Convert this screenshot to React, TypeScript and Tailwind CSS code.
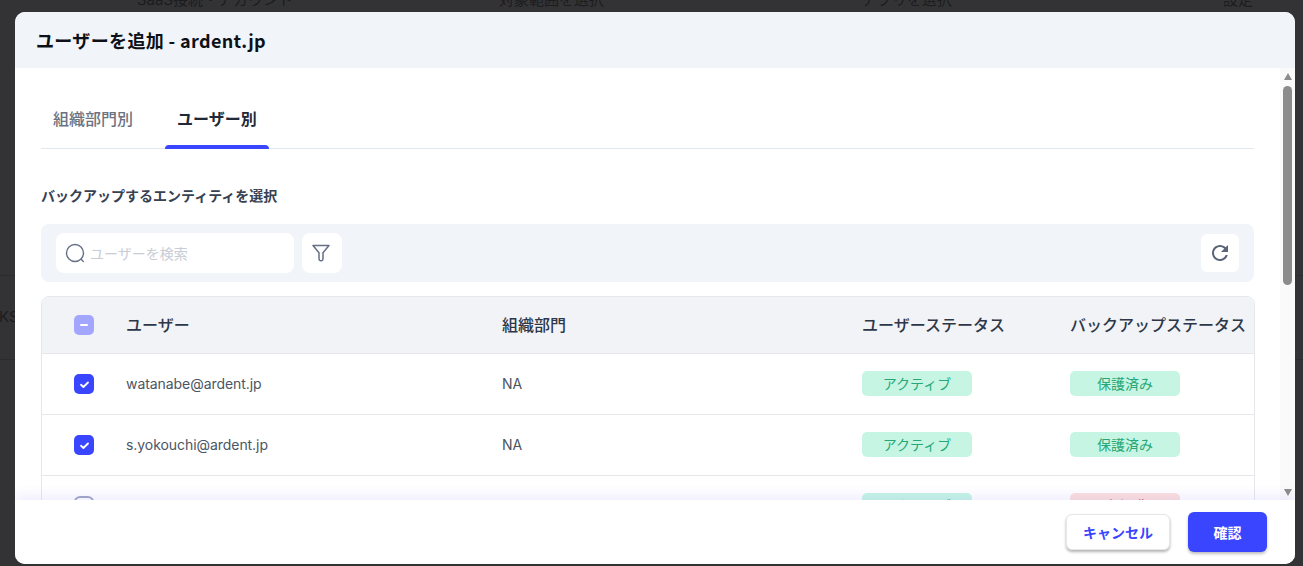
const rows = [
  { email: "watanabe@ardent.jp", checked: true, backup: "保護済み", safe: true },
  { email: "s.yokouchi@ardent.jp", checked: true, backup: "保護済み", safe: true },
  { email: "", checked: false, backup: "未保護", safe: false },
];

const cols = "grid grid-cols-[84px_376px_360px_208px_185px] items-center";

function CheckBox({ checked }: { checked: boolean }) {
  if (!checked) {
    return <div className="w-5 h-5 rounded-[6px] border-2 border-[#a3a9c4] bg-white" />;
  }
  return (
    <div className="w-5 h-5 rounded-[5px] bg-[#3a45ff] flex items-center justify-center">
      <svg width="11" height="11" viewBox="0 0 12 12" fill="none">
        <path d="M2.2 6.300 4.800 8.700 9.800 3.800" stroke="#fff" strokeWidth="2" strokeLinecap="round" strokeLinejoin="round" />
      </svg>
    </div>
  );
}

function Pill({ label, safe }: { label: string; safe: boolean }) {
  return (
    <div
      className={
        safe
          ? "w-[110px] h-[25px] rounded-[5px] bg-[#c6f6e3] text-[#27a777] text-[14px] flex items-center justify-center"
          : "w-[110px] h-[25px] rounded-[5px] bg-[#fde0dc] text-[#dc4a60] text-[14px] flex items-center justify-center"
      }
    >
      {label}
    </div>
  );
}

function Backdrop() {
  return (
    <div className="h-full bg-[#333335] text-[#1c1c1e] text-[15px]">
      <div className="flex h-[12px] items-end overflow-hidden leading-[24px]">
        <span className="ml-[137px] w-[362px] shrink-0">SaaS接続・アカウント</span>
        <span className="w-[363px] shrink-0">対象範囲を選択</span>
        <span className="w-[361px] shrink-0">アプリを選択</span>
        <span>設定</span>
      </div>
      <div className="mt-[263px] h-[85px] border-y border-[#2b2b2d] flex items-center text-[15px]">
        <span className="-ml-[1px]">KSP</span>
      </div>
    </div>
  );
}

export default function App() {
  return (
    <div
      className="relative h-[566px] overflow-hidden"
      style={{ fontFamily: '"Inter", "Noto Sans CJK JP", sans-serif' }}
    >
      <Backdrop />

      <div className="absolute left-[15px] top-[12px] w-[1280px] h-[552px] bg-white rounded-[10px] overflow-hidden flex flex-col">
        <div className="h-[56px] shrink-0 bg-[#f1f4f9] flex items-center pl-[21px]">
          <h2
            className="text-[18px] font-bold tracking-[0.35px] text-[#0d1117]"
            style={{ fontFamily: '"Noto Sans CJK JP", sans-serif' }}
          >
            ユーザーを追加 - ardent.jp
          </h2>
        </div>

        <div className="flex-1 min-h-0 flex">
          <div className="flex-1 min-w-0 overflow-hidden pl-[26px] pr-[26px]">
            <div className="mt-[24px] h-[57px] border-b border-[#e2e8f0] flex gap-[8px]">
              <div className="px-[12px] pt-[14px] text-[16px] font-medium leading-[26px] text-[#6b7280]">組織部門別</div>
              <div className="relative ml-[12px] px-[12px] pt-[14px] text-[16px] font-bold leading-[26px] text-[#1f2937]">
                ユーザー別
                <div className="absolute left-0 right-0 bottom-[-1px] h-[4px] rounded-t-[4px] bg-[#3a45ff]" />
              </div>
            </div>

            <h3 className="mt-[37px] text-[14px] font-bold leading-[20px] text-[#374151]">
              バックアップするエンティティを選択
            </h3>

            <div className="mt-[18px] h-[58px] rounded-[8px] bg-[#f1f4f9] flex items-center pl-[15px] pr-[15px]">
              <div className="w-[238px] h-[40px] rounded-[8px] bg-white flex items-center pl-[9px] gap-[4px] text-[14px] text-[#c8ccd6]">
                <svg width="21" height="21" viewBox="0 0 21 21" fill="none" stroke="#667085" strokeWidth="1.4" strokeLinecap="round">
                  <circle cx="10" cy="10" r="8.5" />
                  <path d="M16.2 16.2 18.4 18.6" />
                </svg>
                ユーザーを検索
              </div>
              <div className="ml-[8px] w-[40px] h-[40px] rounded-[8px] bg-white flex items-center justify-center pr-[2px]">
                <svg width="20" height="20" viewBox="0 0 20 20" fill="none" stroke="#667085" strokeWidth="1.5" strokeLinejoin="round">
                  <path d="M2 2.500h16l-6 7.200v6.400a1.600 1.600 0 0 1-1.600 1.600H9.600A1.600 1.600 0 0 1 8 16.100V9.700z" />
                </svg>
              </div>
              <div className="ml-auto w-[38px] h-[38px] rounded-[6px] bg-white flex items-center justify-center">
                <svg width="24" height="24" viewBox="0 0 24 24" fill="#5b6478">
                  <path d="M17.65 6.35C16.2 4.9 14.21 4 12 4c-4.42 0-7.99 3.58-7.99 8s3.57 8 7.99 8c3.73 0 6.84-2.55 7.73-6h-2.08c-.82 2.33-3.04 4-5.65 4-3.31 0-6-2.69-6-6s2.69-6 6-6c1.66 0 3.14.69 4.22 1.78L13 11h7V4l-2.35 2.35z" />
                </svg>
              </div>
            </div>

            <div className="mt-[14px] w-[1214px] rounded-t-[8px] border border-[#e5e7eb]">
              <div className={`${cols} h-[57px] bg-[#f1f3f7] rounded-t-[8px] border-b border-[#e5e7eb] text-[16px] font-medium text-[#2d3748]`}>
                <div className="pl-[32px]">
                  <div className="w-5 h-5 rounded-[5px] bg-[#a3a6ff] flex items-center justify-center">
                    <div className="w-[8px] h-[2.500px] rounded-full bg-white" />
                  </div>
                </div>
                <div>ユーザー</div>
                <div>組織部門</div>
                <div>ユーザーステータス</div>
                <div className="whitespace-nowrap">バックアップステータス</div>
              </div>
              {rows.map((row, i) => (
                <div key={i} className={`${cols} h-[61px] border-b border-[#e5e7eb] text-[14px] text-[#4b5563]`}>
                  <div className="pl-[32px]">
                    <CheckBox checked={row.checked} />
                  </div>
                  <div className="pb-[1px] tracking-[-0.06px]">{row.email}</div>
                  <div className="pb-[1px]">NA</div>
                  <div className="pb-[1px]">
                    <Pill label="アクティブ" safe />
                  </div>
                  <div className="pb-[1px]">
                    <Pill label={row.backup} safe={row.safe} />
                  </div>
                </div>
              ))}
            </div>
          </div>

          <div className="w-[15px] shrink-0 bg-[#fafafa] flex flex-col items-center pt-[5px]">
            <div className="w-0 h-0 border-x-[4.500px] border-x-transparent border-b-[7px] border-b-[#8c8c8c]" />
            <div className="mt-[6px] w-[9px] h-[199px] rounded-full bg-[#8c8c8c]" />
            <div className="mt-auto mb-[4px] w-0 h-0 border-x-[4.500px] border-x-transparent border-t-[7px] border-t-[#8c8c8c]" />
          </div>
        </div>

        <div className="relative z-10 h-[64px] shrink-0 bg-white shadow-[0_-4px_12px_rgba(90,70,255,0.1)] flex items-center justify-end pr-[28px]">
          <button className="w-[104px] h-[36px] rounded-[6px] bg-white border border-[#e5e7eb] shadow-[0_2px_3px_rgba(0,0,0,0.3)] text-[14px] font-bold text-[#3a45ff]">
            キャンセル
          </button>
          <button className="ml-[18px] w-[79px] h-[40px] rounded-[6px] bg-[#3a45ff] shadow-[0_2px_3px_rgba(0,0,0,0.25)] text-[14px] font-bold text-white">
            確認
          </button>
        </div>
      </div>
    </div>
  );
}
